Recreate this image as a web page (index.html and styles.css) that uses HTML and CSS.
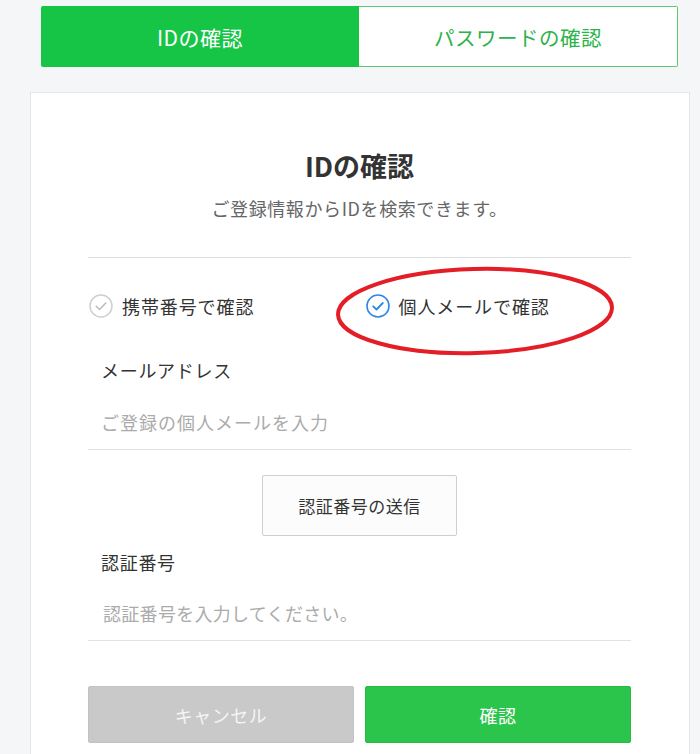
FILE: index.html
```html
<!DOCTYPE html>
<html lang="ja">
<head>
<meta charset="utf-8">
<title>IDの確認</title>
<link rel="stylesheet" href="styles.css">
</head>
<body>
<div class="page">
  <nav class="tabs">
    <a class="tab tab-active">IDの確認</a>
    <a class="tab">パスワードの確認</a>
  </nav>
  <main class="card">
    <h1 class="title">IDの確認</h1>
    <p class="subtitle">ご登録情報からIDを検索できます。</p>
    <hr class="divider">
    <div class="options">
      <label class="option">
        <svg class="check" width="24" height="24" viewBox="0 0 24 24"><circle cx="12" cy="12" r="11" fill="none" stroke="#cfcfcf" stroke-width="1.5"/><path d="M7.2 12.3l3.3 3.2 6.3-6.5" fill="none" stroke="#bdbdbd" stroke-width="1.6" stroke-linecap="round" stroke-linejoin="round"/></svg>
        <span>携帯番号で確認</span>
      </label>
      <label class="option option-on">
        <svg class="check" width="24" height="24" viewBox="0 0 24 24"><circle cx="12" cy="12" r="11" fill="none" stroke="#2f86ea" stroke-width="1.6"/><path d="M7.2 12.3l3.3 3.2 6.3-6.5" fill="none" stroke="#2f86ea" stroke-width="1.8" stroke-linecap="round" stroke-linejoin="round"/></svg>
        <span>個人メールで確認</span>
      </label>
    </div>
    <div class="field-label">メールアドレス</div>
    <div class="input">ご登録の個人メールを入力</div>
    <div class="send-row"><button class="btn-send">認証番号の送信</button></div>
    <div class="field-label label-code">認証番号</div>
    <div class="input input-code">認証番号を入力してください。</div>
    <div class="actions">
      <button class="btn btn-cancel">キャンセル</button>
      <button class="btn btn-ok">確認</button>
    </div>
  </main>
  <svg class="annotation" width="290" height="100" viewBox="0 0 290 100"><ellipse cx="145" cy="49" rx="137" ry="42" fill="none" stroke="#e41e26" stroke-width="4" transform="rotate(-1.5 145 49)"/></svg>
</div>
</body>
</html>
```

FILE: styles.css
```css
* { box-sizing: border-box; }
html, body { margin: 0; padding: 0; }
body {
  background: #f5f6f8;
  font-family: "Noto Sans CJK JP", "Noto Sans", "Liberation Sans", sans-serif;
  color: #333;
  height: 754px;
  overflow: hidden;
}
.page { position: relative; height: 754px; overflow: hidden; }
.tabs {
  display: flex;
  margin: 6px 0 0 41px;
  width: 637px;
  height: 61px;
}
.tab {
  flex: 1;
  display: flex;
  align-items: center;
  justify-content: center;
  font-size: 20.5px;
  letter-spacing: 0.5px;
  color: #2cb34a;
  background: #ffffff;
  border: 1.5px solid #5ec870;
  border-left: none;
  border-radius: 0 2px 2px 0;
}
.tab-active {
  background: #17c546;
  color: #ffffff;
  border: none;
  border-radius: 2px 0 0 2px;
  font-size: 21px;
}
.card {
  margin: 25px 0 0 30px;
  width: 660px;
  height: 680px;
  background: #fff;
  border: 1px solid #e6e6e6;
  padding: 58px 58px 0 57px;
}
.title {
  margin: 0;
  text-align: center;
  font-size: 27px;
  font-weight: 700;
  line-height: 30px;
  color: #333;
}
.subtitle {
  margin: 15px 0 0;
  text-align: center;
  font-size: 18px;
  line-height: 24px;
  color: #666;
  letter-spacing: 0.6px;
}
.divider {
  margin: 37px 0 0;
  border: none;
  border-top: 1px solid #dedede;
}
.options {
  margin-top: 36px;
  display: grid;
  grid-template-columns: 1fr 1fr;
  height: 24px;
}
.option {
  display: flex;
  align-items: center;
  gap: 9px;
  font-size: 18px;
  letter-spacing: 0.9px;
  line-height: 24px;
  color: #333;
}
.option:first-child { padding-left: 1px; }
.option-on { padding-left: 6px; }
.check { flex: none; }
.field-label {
  margin-top: 40px;
  padding-left: 13px;
  font-size: 18px;
  line-height: 24px;
  letter-spacing: 0.7px;
  color: #333;
}
.input {
  margin-top: 13px;
  height: 55px;
  padding: 0 0 1px 13px;
  display: flex;
  align-items: center;
  font-size: 18px;
  letter-spacing: 1px;
  color: #ababab;
  border-bottom: 1px solid #e2e2e2;
}
.send-row {
  margin-top: 25px;
  display: flex;
  justify-content: center;
}
.btn-send {
  width: 195px;
  height: 61px;
  background: #fcfcfc;
  border: 1px solid #cfcfcf;
  border-radius: 2px;
  font-family: inherit;
  font-size: 17px;
  letter-spacing: 0.5px;
  color: #333;
  padding: 0;
}
.label-code { margin-top: 14px; }
.input-code { margin-top: 12px; padding-left: 15px; letter-spacing: 0.3px; }
.actions {
  margin-top: 45px;
  display: grid;
  grid-template-columns: 1fr 1fr;
  gap: 11px;
}
.btn {
  height: 57px;
  border-radius: 2px;
  font-family: inherit;
  font-size: 18px;
  padding: 0;
  letter-spacing: 0.5px;
}
.btn-cancel {
  background: #c9c9c9;
  border: 1px solid #c2c2c2;
  color: #f4f4f4;
}
.btn-ok {
  background: #2bc54b;
  border: 1px solid #26bb45;
  color: #ffffff;
}
.annotation {
  position: absolute;
  left: 330px;
  top: 262px;
}
```
